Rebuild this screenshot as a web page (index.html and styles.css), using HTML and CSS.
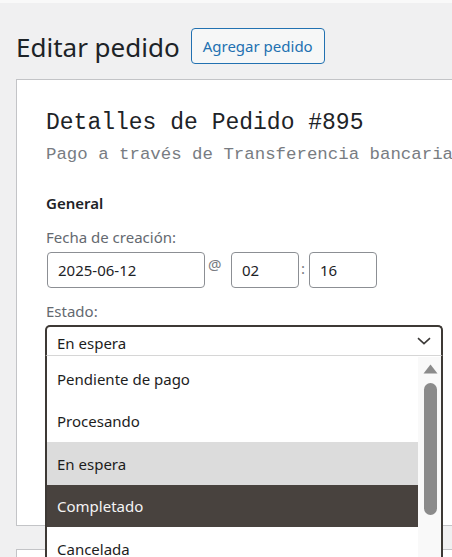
FILE: index.html
```html
<!DOCTYPE html>
<html lang="es">
<head>
<meta charset="utf-8">
<title>Editar pedido</title>
<link rel="stylesheet" href="styles.css">
</head>
<body>
<div class="topstrip"></div>
<div class="wrap">
  <div class="heading">
    <h1 class="title">Editar pedido</h1>
    <a class="btn">Agregar pedido</a>
  </div>
  <div class="card card-main">
    <h2 class="order-title">Detalles de Pedido #895</h2>
    <p class="order-sub">Pago a través de Transferencia bancaria</p>
    <h3 class="section">General</h3>
    <div class="label">Fecha de creación:</div>
    <div class="daterow">
      <div class="input date">2025-06-12</div>
      <span class="sep at">@</span>
      <div class="input time">02</div>
      <span class="sep colon">:</span>
      <div class="input time">16</div>
    </div>
    <div class="label label-estado">Estado:</div>
    <div class="select-wrap">
      <div class="select">
        <span>En espera</span>
        <svg class="chev" width="14" height="8" viewBox="0 0 14 8"><path d="M1 1.2 L7 6.6 L13 1.2" fill="none" stroke="#3c3a38" stroke-width="1.6"/></svg>
      </div>
      <div class="dropdown">
        <div class="options">
          <div class="opt">Pendiente de pago</div>
          <div class="opt">Procesando</div>
          <div class="opt hover">En espera</div>
          <div class="opt selected">Completado</div>
          <div class="opt">Cancelada</div>
        </div>
        <div class="scrollbar">
          <svg class="arrow" width="15" height="10" viewBox="0 0 15 10"><path d="M7.5 0.5 L14.5 9.5 L0.5 9.5 Z" fill="#8b8b8b"/></svg>
          <div class="thumb"></div>
        </div>
      </div>
    </div>
  </div>
  <div class="card card2"></div>
</div>
</body>
</html>
```
FILE: styles.css
```css
html, body {
  margin: 0;
  padding: 0;
}
body {
  background: #f0f0f1;
  font-family: "Noto Sans", "Open Sans", sans-serif;
  font-size: 15px;
  color: #1d2327;
  overflow: hidden;
  height: 557px;
}
.topstrip {
  height: 3px;
  background: #f9f9f9;
}
.wrap {
  padding-left: 16px;
  padding-top: 25px;
}
.heading {
  display: flex;
  align-items: center;
  height: 36px;
  margin-bottom: 15px;
}
.title {
  margin: 0;
  font-size: 26px;
  font-weight: 400;
  line-height: 36px;
  color: #1d2327;
  padding-top: 1px;
}
.btn {
  margin-left: 11px;
  box-sizing: border-box;
  height: 36px;
  width: 134px;
  display: flex;
  align-items: center;
  justify-content: center;
  border: 1px solid #2271b1;
  border-radius: 4px;
  background: #f6f7f7;
  color: #2271b1;
  font-size: 15px;
}
.card {
  position: relative;
  width: 700px;
  box-sizing: border-box;
  height: 447px;
  background: #fff;
  border: 1px solid #c3c4c7;
  padding: 28px 0 0 29px;
}
.card-main {
  z-index: 2;
}
.card2 {
  z-index: 1;
  margin-top: 23px;
  height: 60px;
}
.order-title {
  margin: 0;
  font-family: "Liberation Mono", "DejaVu Sans Mono", monospace;
  font-weight: 400;
  font-size: 23px;
  line-height: 30px;
  color: #1d2327;
}
.order-sub {
  margin: 6px 0 0 0;
  font-family: "Liberation Mono", "DejaVu Sans Mono", monospace;
  font-size: 17.4px;
  line-height: 22px;
  color: #787c82;
  white-space: nowrap;
}
.section {
  margin: 27px 0 0 0;
  font-size: 15px;
  font-weight: 600;
  line-height: 20px;
  color: #1d2327;
}
.label {
  margin-top: 14px;
  line-height: 20px;
  color: #646970;
}
.label-estado {
  margin-top: 13px;
}
.daterow {
  margin-top: 5px;
  display: flex;
  align-items: flex-start;
}
.input {
  box-sizing: border-box;
  height: 36px;
  border: 1px solid #8c8f94;
  border-radius: 4px;
  padding: 0 10px;
  display: flex;
  align-items: center;
  color: #1d2327;
  background: #fff;
}
.input.date {
  margin-left: 1px;
  width: 158px;
}
.input.time {
  width: 68px;
}
.sep {
  color: #787c82;
  line-height: 20px;
  padding-top: 2px;
}
.at {
  width: 26px;
  padding-left: 3px;
  box-sizing: border-box;
}
.colon {
  width: 10px;
  padding-left: 2px;
  box-sizing: border-box;
  padding-top: 6px;
}
.select-wrap {
  position: relative;
  margin-top: 4px;
  margin-left: -1px;
  width: 398px;
}
.select {
  box-sizing: border-box;
  height: 31px;
  border: 2px solid #3d3935;
  border-bottom: 1px solid #d6d6d6;
  border-radius: 5px 5px 0 0;
  display: flex;
  align-items: center;
  justify-content: space-between;
  padding: 4px 10px 0 10px;
  color: #1d1d1d;
}
.chev {
  margin-top: -4px;
}
.dropdown {
  position: absolute;
  top: 31px;
  left: 0;
  width: 398px;
  height: 240px;
  box-sizing: border-box;
  border-left: 2px solid #3d3935;
  border-right: 2px solid #3d3935;
  background: #fff;
  display: flex;
  padding-top: 1px;
}
.options {
  flex: 1;
}
.opt {
  height: 42.5px;
  display: flex;
  align-items: center;
  padding-left: 10px;
  padding-top: 1px;
  box-sizing: border-box;
  color: #1d1d1d;
}
.opt.hover {
  background: #dcdcdc;
}
.opt.selected {
  background: #48423e;
  color: #f4f4f4;
}
.scrollbar {
  width: 23px;
  background: #f9f9f9;
  display: flex;
  flex-direction: column;
  align-items: center;
}
.arrow {
  margin-top: 7px;
  margin-left: 1px;
}
.thumb {
  margin-top: 9px;
  width: 13px;
  height: 132px;
  border-radius: 7px;
  background: #8b8b8b;
  margin-left: 1px;
}
```
